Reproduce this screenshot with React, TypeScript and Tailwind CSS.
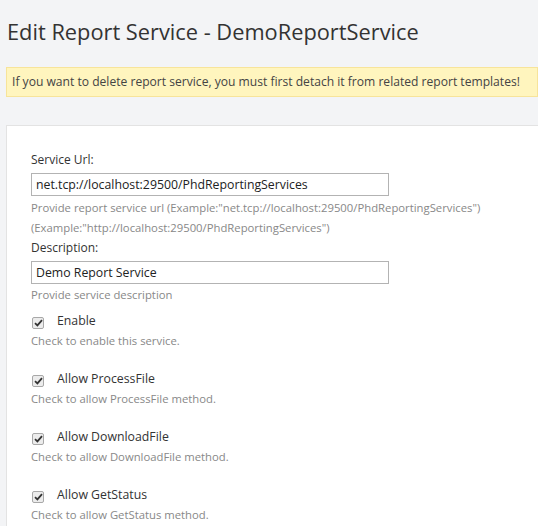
import React from "react"

const font = { fontFamily: '"Open Sans", "Noto Sans", sans-serif' }

function Check() {
  return (
    <span className="inline-flex h-[12px] w-[12px] items-center justify-center rounded-[2px] border border-[#a8a8a8] bg-[#ececec]">
      <svg width="9" height="8" viewBox="0 0 9 8">
        <path d="M1 4.2 L3.4 6.4 L8 1.2" fill="none" stroke="#333" strokeWidth="1.8" />
      </svg>
    </span>
  )
}

function CheckRow({ label, help }: { label: string; help: string }) {
  return (
    <div className="mb-[18px]">
      <div className="flex h-[20px] items-center">
        <span className="mr-[13px] ml-[1px]">
          <Check />
        </span>
        <span className="text-[12.3px] text-[#333]">{label}</span>
      </div>
      <div className="text-[11.3px] leading-[20px] text-[#888]">{help}</div>
    </div>
  )
}

export default function App() {
  return (
    <div className="h-[526px] w-full overflow-hidden bg-[#f3f4f6]" style={font}>
      <div className="pt-[16px] pl-[7px] text-[21.8px] leading-[32px] text-[#333]">
        Edit Report Service - DemoReportService
      </div>
      <div className="mt-[19px] ml-[6px] flex h-[30px] items-center border border-[#f7e49a] bg-[#fff5be] pl-[5px] text-[12.1px] whitespace-nowrap text-[#444]">
        If you want to delete report service, you must first detach it from related report templates!
      </div>
      <div className="mt-[28px] ml-[6px] border-t border-l border-[#e3e3e3] bg-white pt-[24px] pb-[10px] pl-[24px]">
        <div className="text-[12px] leading-[20px] text-[#333]">Service Url:</div>
        <input
          readOnly
          value="net.tcp://localhost:29500/PhdReportingServices"
          className="mt-[3px] block h-[23px] w-[358px] border border-[#b3b3b3] px-[4px] text-[12.3px] text-[#222] outline-none"
        />
        <div className="mt-[2px] text-[11.3px] leading-[20px] text-[#888]">
          Provide report service url (Example:"net.tcp://localhost:29500/PhdReportingServices")
        </div>
        <div className="text-[11.3px] leading-[20px] text-[#888]">
          (Example:"http://localhost:29500/PhdReportingServices")
        </div>
        <div className="text-[12px] leading-[20px] text-[#333]">Description:</div>
        <input
          readOnly
          value="Demo Report Service"
          className="mt-[3px] block h-[23px] w-[358px] border border-[#b3b3b3] px-[4px] text-[12.3px] text-[#222] outline-none"
        />
        <div className="mt-[1px] mb-[6px] text-[11.3px] leading-[20px] text-[#888]">Provide service description</div>
        <CheckRow label="Enable" help="Check to enable this service." />
        <CheckRow label="Allow ProcessFile" help="Check to allow ProcessFile method." />
        <CheckRow label="Allow DownloadFile" help="Check to allow DownloadFile method." />
        <CheckRow label="Allow GetStatus" help="Check to allow GetStatus method." />
      </div>
    </div>
  )
}
